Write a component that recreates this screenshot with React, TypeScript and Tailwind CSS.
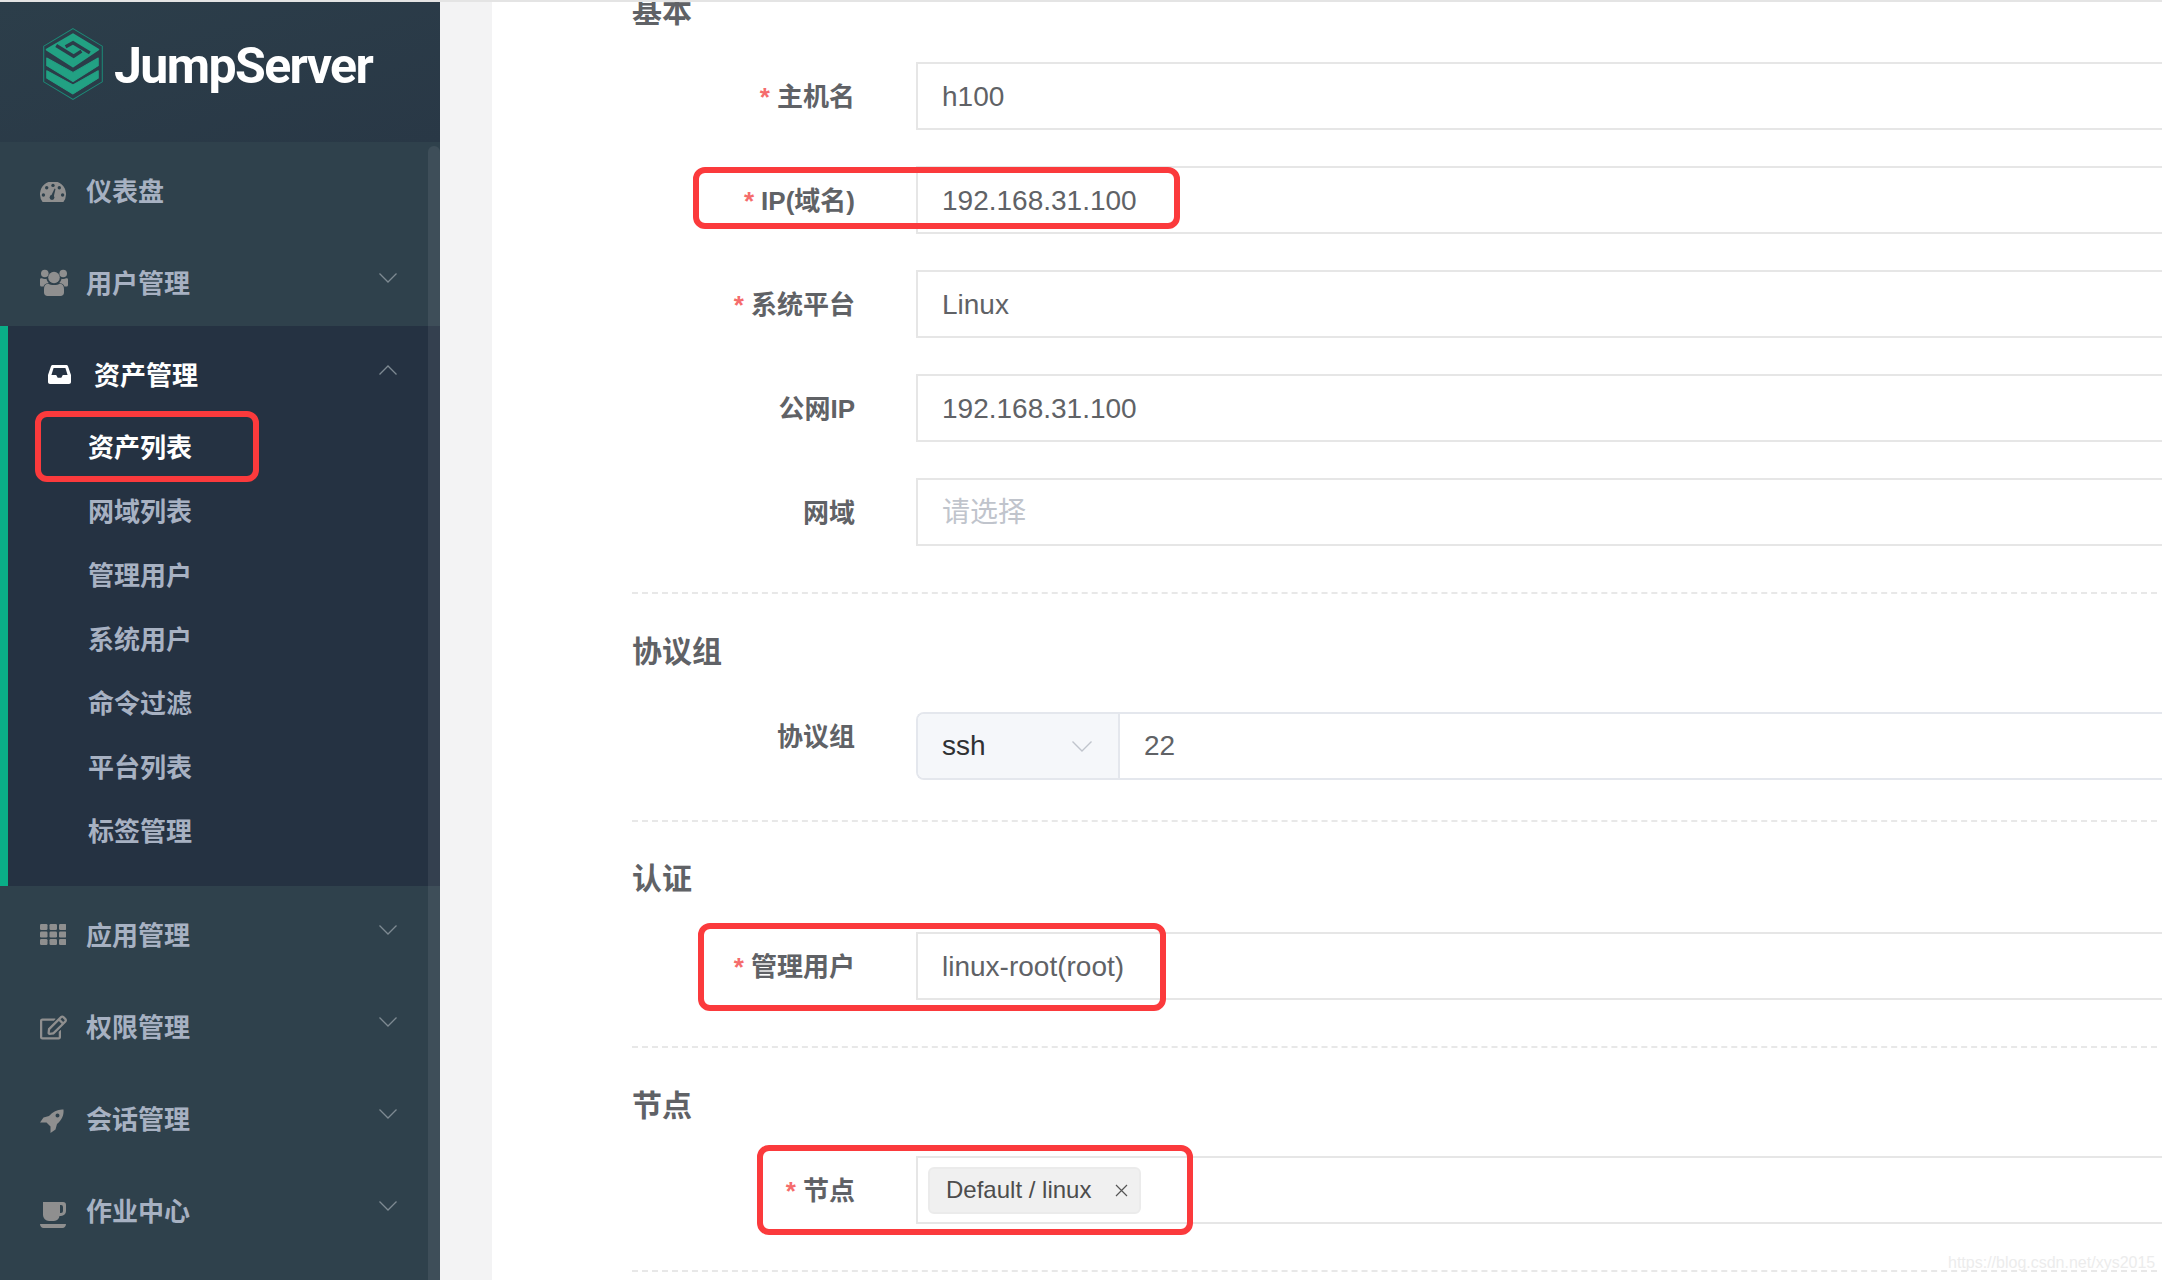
import { FaRegEdit } from "react-icons/fa";
import type { ReactNode } from "react";

const Logo = () => (
  <svg width="60" height="72" viewBox="-2 -2 178 214" className="shrink-0">
    <polygon points="87,0 174,52 174,158 87,210 0,158 0,52" fill="none" stroke="#1c8c78" strokeWidth="3" />
    <polygon points="87,17 162,62 87,112 9,62" fill="#22a183" stroke="#22a183" strokeWidth="6" strokeLinejoin="round" />
    <polyline points="37,50 89,82 112,67" fill="none" stroke="#2b3c49" strokeWidth="10" />
    <polyline points="137,72 87,42 65,54" fill="none" stroke="#2b3c49" strokeWidth="10" />
    <polygon points="9,87 9,110 87,157 162,110 162,87 87,130" fill="#22a183" stroke="#22a183" strokeWidth="3" strokeLinejoin="round" />
    <polygon points="9,125 9,147 87,194 162,147 162,125 87,167" fill="#22a183" stroke="#22a183" strokeWidth="3" strokeLinejoin="round" />
  </svg>
);

const Chevron = () => (
  <svg width="18" height="10" viewBox="0 0 18 10" fill="none" stroke="#7e8a92" strokeWidth="1.3" className="absolute right-[43px] top-[39px]">
    <polyline points="0.5,0.5 9,9 17.5,0.5" />
  </svg>
);

const GaugeIcon = () => (
  <svg width="26" height="20" viewBox="0 0 26 20" fill="#8f8f8f">
    <path d="M2.600 20A13 13 0 1 1 23.400 20Z" />
    <g fill="#2f414c">
      <circle cx="3.400" cy="13" r="1.700" />
      <circle cx="6.700" cy="5.800" r="1.700" />
      <circle cx="13" cy="3.400" r="1.700" />
      <circle cx="19.300" cy="5.800" r="1.700" />
      <circle cx="22.600" cy="13" r="1.700" />
      <circle cx="12" cy="15.500" r="2.400" />
      <path d="M10.800 14.500L14.600 6.500l.9.400L13.400 16z" />
    </g>
  </svg>
);

const UsersIcon = () => (
  <svg width="28" height="27" viewBox="0 0 28 27" fill="#8f8f8f">
    <circle cx="4.800" cy="4.500" r="3.800" />
    <circle cx="23.200" cy="4.500" r="3.800" />
    <circle cx="14" cy="8.500" r="5.800" />
    <path d="M0 10.500c0-1 1-1.500 2-1.200 1 .6 2.500.9 4.500.5.400 1.700 1 2.900 2.200 4C5.500 14.500 3.900 16 3.600 17.500H1.500C.5 17.500 0 16.800 0 16zM28 10.500c0-1-1-1.500-2-1.200-1 .6-2.500.9-4.500.5-.4 1.700-1 2.900-2.200 4 3.200.7 4.800 2.200 5.100 3.700h2.100c1 0 1.500-.7 1.500-1.500z" />
    <path d="M8 14.500c1.500 1 3.700 1.500 6 1.500s4.500-.5 6-1.500c2.800.5 4 2.500 4 5.500v3.500c0 2-1.500 3.500-3.500 3.500h-13C5.500 27 4 25.500 4 23.500V20c0-3 1.200-5 4-5.500z" />
  </svg>
);

const ThIcon = () => (
  <svg width="26" height="21" viewBox="0 0 26 21" fill="#8f8f8f">
    {[0, 7.5, 15].map((y) =>
      [0, 9.5, 19].map((x) => <rect key={`${x}-${y}`} x={x} y={y} width="7.5" height="6" rx="1.2" />)
    )}
  </svg>
);

const RocketIcon = () => (
  <svg width="24" height="24" viewBox="0 0 24 24" fill="#8f8f8f">
    <path
      fillRule="evenodd"
      d="M23.500.5C24 6 22 11 17 15l-1.500 5.500-5 3.500v-6.500l-4-4H0l3.500-5L9 7c4-4.500 9-7 14.500-6.500zM17.500 4.500a2 2 0 1 0 0 4 2 2 0 0 0 0-4z"
    />
  </svg>
);

const InboxIcon = () => (
  <svg width="23" height="19" viewBox="0 0 23 19" fill="#ffffff">
    <path d="M5 0h13c1 0 1.700.500 2.100 1.400L23 10v7c0 1.100-.9 2-2 2H2c-1.100 0-2-.9-2-2v-7L2.900 1.400C3.300.500 4 0 5 0zm.600 3L3.400 10h4.800l1.500 2.800h3.600l1.500-2.800h4.800L17.400 3H5.600z" fillRule="evenodd" />
  </svg>
);

const CoffeeIcon = () => (
  <svg width="26" height="26" viewBox="0 0 26 26" fill="#8f8f8f">
    <path d="M3 0h20a3 3 0 0 1 3 3v6a5 5 0 0 1-5 5h-1.500A6 6 0 0 1 14 19H9a6 6 0 0 1-6-6V0zm17 3v8h1a2 2 0 0 0 2-2V5a2 2 0 0 0-2-2h-1z" fillRule="evenodd" />
    <path d="M0 22h26c0 2-1.500 4-3.500 4h-19C1.500 26 0 24 0 22z" />
  </svg>
);

const MenuItem = ({ icon, label, iconClass = "", arrow = true }: { icon: ReactNode; label: string; iconClass?: string; arrow?: boolean }) => (
  <div className="relative flex h-[92px] items-center pl-[40px] pt-[9px] text-[26px] font-bold text-[#a7b1c2]">
    <span className={`flex w-[46px] shrink-0 items-center ${iconClass}`}>{icon}</span>
    <span>{label}</span>
    {arrow && <Chevron />}
  </div>
);

const Sidebar = () => {
  const subItems = ["资产列表", "网域列表", "管理用户", "系统用户", "命令过滤", "平台列表", "标签管理"];
  return (
    <aside className="relative h-[1278px] w-[440px] shrink-0 overflow-hidden bg-[#2f414c]">
      <div className="flex h-[140px] items-start gap-[11px] bg-gradient-to-br from-[#2c3e4a] to-[#293846] pl-[43px] pt-[26px]">
        <Logo />
        <span className="mt-[8px] font-['Roboto',sans-serif] text-[50px] leading-[60px] font-bold tracking-[-1.6px] text-white">JumpServer</span>
      </div>
      <MenuItem arrow={false} label="仪表盘" icon={<GaugeIcon />} iconClass="mb-[1px]" />
      <MenuItem label="用户管理" icon={<UsersIcon />} iconClass="mb-[4px]" />
      <div className="h-[560px] border-l-[8px] border-[#0aae87] bg-[#253242]">
        <div className="relative flex h-[92px] items-center pl-[40px] pt-[9px] text-[26px] font-bold text-white">
          <span className="mb-[4px] flex w-[46px] shrink-0 items-center"><InboxIcon /></span>
          <span>资产管理</span>
          <svg width="18" height="10" viewBox="0 0 18 10" fill="none" stroke="#7e8a92" strokeWidth="1.3" className="absolute right-[43px] top-[39px]">
            <polyline points="0.5,9.5 9,1 17.5,9.5" />
          </svg>
        </div>
        <ul className="-mt-[2px]">
          {subItems.map((item, i) => (
            <li key={item} className={`flex h-[64px] items-center pl-[80px] text-[26px] font-bold ${i === 0 ? "text-white" : "text-[#a7b1c2]"}`}>
              {item}
            </li>
          ))}
        </ul>
      </div>
      <MenuItem label="应用管理" icon={<ThIcon />} iconClass="mb-[4px]" />
      <MenuItem label="权限管理" icon={<FaRegEdit size={27} color="#8f8f8f" />} iconClass="mb-[2px]" />
      <MenuItem label="会话管理" icon={<RocketIcon />} />
      <MenuItem label="作业中心" icon={<CoffeeIcon />} iconClass="mt-[4px]" />
      <div className="absolute right-0 top-[144px] bottom-0 w-[12px] rounded-t-[6px] bg-white/[0.07]" />
    </aside>
  );
};

const Label = ({ text, required }: { text: string; required?: boolean }) => (
  <label className="w-[223px] shrink-0 pt-[2px] text-right text-[26px] leading-[34px] font-bold text-[#606266]">
    {required && <span className="mr-[7px] text-[#f56c6c]">*</span>}
    {text}
  </label>
);

const Row = ({ label, required, children }: { label: string; required?: boolean; children: ReactNode }) => (
  <div className="flex h-[68px] items-center">
    <Label text={label} required={required} />
    <div className="ml-[61px] flex h-full flex-1 items-center border-2 border-r-0 border-[#e6e6e6] pl-[24px] pt-[1px] text-[28px] text-[#606266]">
      {children}
    </div>
  </div>
);

const Heading = ({ children, className }: { children: string; className: string }) => (
  <h3 className={`h-[40px] text-[30px] leading-[40px] font-bold text-[#606266] ${className}`}>{children}</h3>
);

const Dashed = ({ className }: { className: string }) => (
  <div className={`w-[1525px] border-t-2 border-dashed border-[#e8e8e8] ${className}`} />
);

const Annotation = ({ className }: { className: string }) => (
  <div className={`absolute rounded-[12px] border-[6px] border-[#fb3a3c] ${className}`} />
);

export default function App() {
  return (
    <div className="relative flex h-[1280px] w-[2162px] overflow-hidden border-t-2 border-[#e4e4e4] bg-white font-['Liberation_Sans','Noto_Sans_CJK_SC',sans-serif]">
      <Sidebar />
      <div className="w-[52px] shrink-0 bg-[#f3f3f4]" />
      <main className="flex-1 pl-[141px]">
        <div className="-ml-[1px]">
          <Heading className="mt-[-10px] mb-[30px]">基本</Heading>
          <div className="flex flex-col gap-[36px]">
            <Row label="主机名" required>h100</Row>
            <Row label="IP(域名)" required>192.168.31.100</Row>
            <Row label="系统平台" required>Linux</Row>
            <Row label="公网IP">192.168.31.100</Row>
            <Row label="网域"><span className="text-[#c0c4cc]">请选择</span></Row>
          </div>
          <Dashed className="mt-[46px]" />
          <Heading className="mt-[38px] mb-[40px]">协议组</Heading>
          <div className="flex h-[68px]">
            <label className="w-[223px] shrink-0 pt-[8px] text-right text-[26px] leading-[34px] font-bold text-[#606266]">协议组</label>
            <div className="ml-[61px] flex flex-1 items-center rounded-l-[8px] border-2 border-r-0 border-[#e4e7ed] text-[28px] text-[#606266]">
              <div className="flex h-full w-[202px] shrink-0 items-center justify-between rounded-l-[6px] border-r-2 border-[#e4e7ed] bg-[#f5f7fa] pl-[24px] pr-[26px] text-[#303133]">
                ssh
                <svg width="20" height="11" viewBox="0 0 20 11" fill="none" stroke="#c0c4cc" strokeWidth="1.4"><polyline points="0.5,0.5 10,10 19.500,0.5" /></svg>
              </div>
              <span className="pl-[24px]">22</span>
            </div>
          </div>
          <Dashed className="mt-[40px]" />
          <Heading className="mt-[37px] mb-[33px]">认证</Heading>
          <Row label="管理用户" required>linux-root(root)</Row>
          <Dashed className="mt-[46px]" />
          <Heading className="mt-[38px] mb-[30px]">节点</Heading>
          <div className="flex h-[68px] items-center">
            <Label text="节点" required />
            <div className="ml-[61px] flex h-full flex-1 items-center border-2 border-r-0 border-[#e6e6e6] pl-[10px]">
              <span className="flex h-[47px] w-[213px] items-center rounded-[6px] border-2 border-[#ebebeb] bg-[#f0f0f0] pl-[16px] text-[24px] text-[#4d4d4d]">
                Default / linux
                <svg width="13" height="13" viewBox="0 0 13 13" stroke="#555" strokeWidth="1.200" className="ml-[24px]"><path d="M1 1l11 11M12 1L1 12" /></svg>
              </span>
            </div>
          </div>
          <Dashed className="mt-[46px]" />
        </div>
      </main>
      <Annotation className="left-[35px] top-[409px] h-[71px] w-[224px]" />
      <Annotation className="left-[693px] top-[165px] h-[62px] w-[487px]" />
      <Annotation className="left-[698px] top-[921px] h-[88px] w-[468px]" />
      <Annotation className="left-[757px] top-[1143px] h-[90px] w-[436px]" />
      <span className="absolute left-[1948px] top-[1249px] text-[16px] text-[#ececec]">https://blog.csdn.net/xys2015</span>
    </div>
  );
}
